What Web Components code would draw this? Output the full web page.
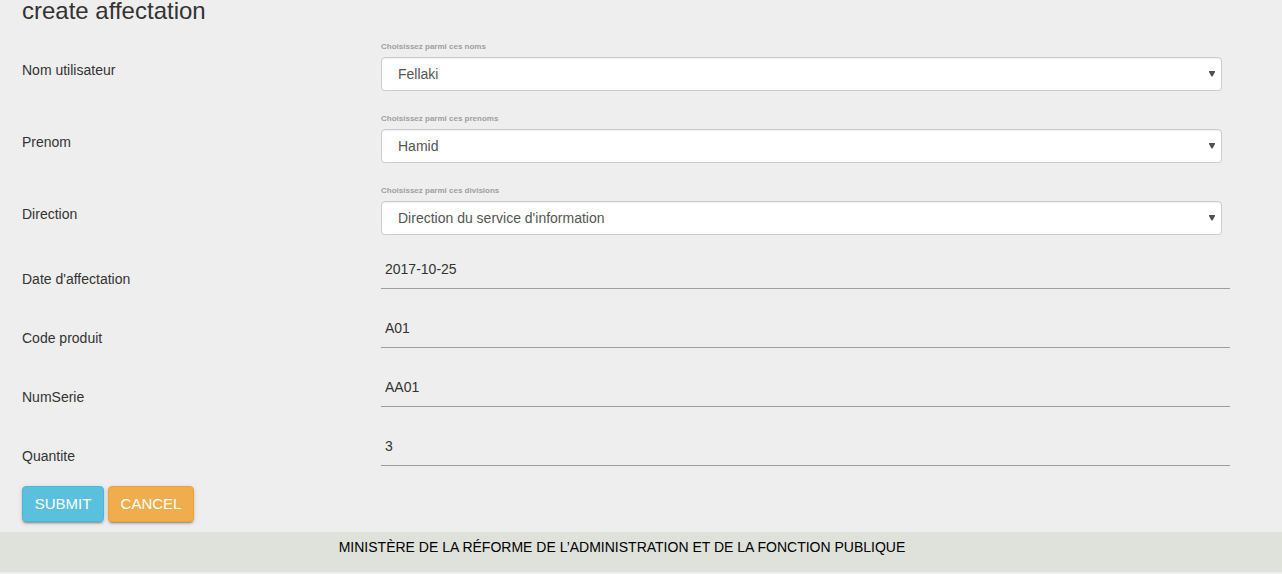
<!DOCTYPE html>
<html lang="fr">
<head>
<meta charset="utf-8">
<meta name="viewport" content="width=device-width, initial-scale=1">
<title>create affectation</title>
<style>
  body {
    margin: 0;
    background: #eee;
    color: #333;
    font: 14px/20px "Liberation Sans", Arial, sans-serif;
  }
</style>
</head>
<body>
<affectation-page>
  <affectation-form heading="create affectation">
    <select-row label="Nom utilisateur" caption="Choisissez parmi ces noms" value="Fellaki"></select-row>
    <select-row label="Prenom" caption="Choisissez parmi ces prenoms" value="Hamid"></select-row>
    <select-row label="Direction" caption="Choisissez parmi ces divisions" value="Direction du service d'information"></select-row>
    <text-row label="Date d'affectation" value="2017-10-25"></text-row>
    <text-row label="Code produit" value="A01"></text-row>
    <text-row label="NumSerie" value="AA01"></text-row>
    <text-row label="Quantite" value="3"></text-row>
    <form-actions slot="actions"></form-actions>
  </affectation-form>
  <page-footer slot="footer">MINISTÈRE DE LA RÉFORME DE L’ADMINISTRATION ET DE LA FONCTION PUBLIQUE</page-footer>
</affectation-page>

<script>
const rowStyle = `
  :host {
    display: grid;
    grid-template-columns: 359fr 849fr;
    align-items: center;
  }
  * { box-sizing: border-box; }
`;

function define(name, html, setup) {
  const template = document.createElement('template');
  template.innerHTML = html;
  customElements.define(name, class extends HTMLElement {
    constructor() {
      super();
      this.attachShadow({ mode: 'open' }).append(template.content.cloneNode(true));
      if (setup) setup(this, this.shadowRoot);
    }
  });
}

define('affectation-page', `
  <style>:host { display: block; } main { display: block; }</style>
  <main><slot></slot></main>
  <slot name="footer"></slot>
`);

define('affectation-form', `
  <style>
    :host { display: block; padding: 0 52px 10px 22px; }
    h1 { margin: 0 0 12px; font-size: 24px; line-height: 22px; font-weight: normal; }
  </style>
  <h1></h1>
  <form><slot></slot><slot name="actions"></slot></form>
`, (host, root) => {
  root.querySelector('h1').textContent = host.getAttribute('heading');
});

define('select-row', `
  <style>
    ${rowStyle}
    .field { padding: 0 8px 15px 0; }
    .caption { display: block; height: 23px; font-size: 8px; line-height: 25px; font-weight: bold; color: #9e9e9e; }
    .box { position: relative; }
    select {
      display: block;
      width: 100%;
      height: 34px;
      padding: 0 32px 0 16px;
      border: 1px solid #ccc;
      border-radius: 4px;
      background: #fff;
      box-shadow: inset 0 1px 1px rgba(0, 0, 0, .075);
      color: #555;
      font: inherit;
      appearance: none;
    }
    svg { position: absolute; right: 7px; top: 14px; pointer-events: none; }
  </style>
  <label class="name" for="control"></label>
  <div class="field">
    <label class="caption" for="control"></label>
    <div class="box">
      <select id="control"></select>
      <svg width="6" height="6" viewBox="0 0 6 6" aria-hidden="true"><path d="M0 0h6v1L3.5 5.5h-1L0 1z" fill="#505050"/></svg>
    </div>
  </div>
`, (host, root) => {
  root.querySelector('.name').textContent = host.getAttribute('label');
  root.querySelector('.caption').textContent = host.getAttribute('caption');
  root.querySelector('select').add(new Option(host.getAttribute('value')));
});

define('text-row', `
  <style>
    ${rowStyle}
    label { padding-bottom: 1px; }
    input {
      display: block;
      width: 100%;
      height: 39px;
      margin: 0 0 20px;
      padding: 0 4px;
      border: 0;
      border-bottom: 1px solid #9e9e9e;
      border-radius: 0;
      background: transparent;
      color: #333;
      font: inherit;
    }
  </style>
  <label for="control"></label>
  <input id="control" type="text">
`, (host, root) => {
  root.querySelector('label').textContent = host.getAttribute('label');
  root.querySelector('input').value = host.getAttribute('value');
});

define('form-actions', `
  <style>
    :host { display: flex; gap: 4px; }
    button {
      box-sizing: border-box;
      width: 82px;
      height: 36px;
      padding: 0;
      border: 1px solid #46b8da;
      border-radius: 4px;
      background: #5bc0de;
      box-shadow: 0 2px 2px rgba(0, 0, 0, .14), 0 1px 5px rgba(0, 0, 0, .12), 0 3px 1px -2px rgba(0, 0, 0, .2);
      color: #fff;
      font: inherit;
      font-size: 15px;
      cursor: pointer;
    }
    .cancel { width: 86px; border-color: #eea236; background: #f0ad4e; }
  </style>
  <button type="submit">SUBMIT</button>
  <button type="button" class="cancel">CANCEL</button>
`);

define('page-footer', `
  <style>
    :host { display: block; background: #dfe2db; color: #000; }
    footer { padding: 5px 0 15px; margin-right: 38px; text-align: center; }
  </style>
  <footer><slot></slot></footer>
`);
</script>
</body>
</html>
